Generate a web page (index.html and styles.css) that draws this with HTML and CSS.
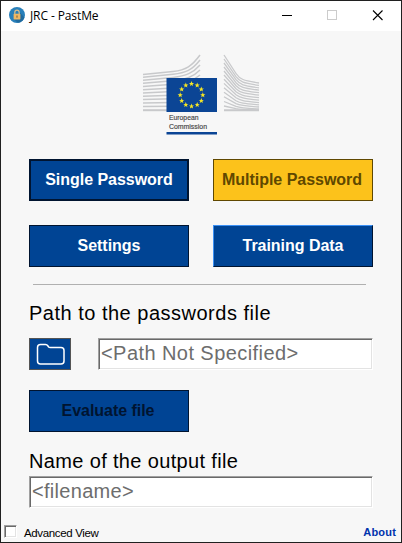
FILE: index.html
```html
<!DOCTYPE html>
<html lang="en">
<head>
<meta charset="utf-8">
<title>JRC - PastMe</title>
<link rel="stylesheet" href="styles.css">
</head>
<body>
<div class="window">
  <header class="titlebar">
    <svg class="app-icon" width="16" height="16" viewBox="0 0 16 16">
      <circle cx="8" cy="8" r="8" fill="#2980ba"/>
      <path d="M11 5.500L15.400 10.500A8 8 0 0 1 9 15.800L5 12.500Z" fill="#206a9e"/>
      <path d="M5.800 7V5.400a2.200 2.200 0 0 1 4.400 0V7" fill="none" stroke="#d9bd8c" stroke-width="1.200"/>
      <rect x="4.600" y="6.800" width="6.800" height="5.600" rx=".6" fill="#efb865"/>
      <rect x="7.400" y="8.500" width="1.200" height="2.200" fill="#8a6b3d"/>
    </svg>
    <span class="title">JRC - PastMe</span>
    <svg class="controls" width="136" height="30" viewBox="0 0 136 30" fill="none" shape-rendering="crispEdges">
      <path d="M17 14.500h10" stroke="#000"/>
      <rect x="62.500" y="9.500" width="9" height="9" stroke="#ccc"/>
      <path d="M108 9.500l9.500 9.500M117.500 9.500l-9.500 9.500" stroke="#000" stroke-width="1.100" shape-rendering="auto"/>
    </svg>
  </header>
  <main class="content">
    <svg class="logo" width="118" height="82" viewBox="0 0 118 82">
      <g fill="none" stroke="#c8c9cb" stroke-width="1.500">
        <path d="M1 20.500L31 17.500C44 16 50 12 58 1"/>
        <path d="M1 23.200L31 20.300C44 19 50 16 58 6"/>
        <path d="M1 26.200L31 23.400C44 22 51 19 58 11"/>
        <path d="M1 29.200L31 26.800C44 25.500 51 23 58 16"/>
        <path d="M1 32.500L31 30.200C44 29 51 27 58 21"/>
        <path d="M1 35.700L31 34"/>
        <path d="M1 39L31 37.500"/>
        <path d="M1 42.300L31 41.200"/>
        <path d="M1 45.600L31 44.800"/>
        <path d="M1 49L31 48.500"/>
        <path d="M1 52.400L31 52.200"/>
        <path d="M1 56.200H31" stroke-width="2"/>
      </g>
      <g fill="none" stroke="#c8c9cb" stroke-width="1.300">
        <path d="M82 1L94 19.500C98 25.500 101 26.300 117 29"/>
        <path d="M82 5L94 22.600C98 28 101 28.900 117 31.400"/>
        <path d="M82 9L94 25.700C98 30.700 101 31.500 117 33.800"/>
        <path d="M82 13L94 28.700C98 33.300 101 34.100 117 36.200"/>
        <path d="M82 17L94 31.700C98 35.900 101 36.700 117 38.700"/>
        <path d="M82 21L94 34.700C98 38.500 101 39.200 117 41.200"/>
        <path d="M82 25.200L94 37.800C98 41.100 101 41.900 117 43.700"/>
        <path d="M82 29.400L94 40.800C98 43.700 101 44.400 117 46.200"/>
        <path d="M82 33.700L94 43.800C98 46.300 101 47 117 48.600"/>
        <path d="M82 38.200L94 46.700C98 48.900 101 49.500 117 50.900"/>
        <path d="M82 42.800L94 49.600C98 51.400 101 51.900 117 53"/>
        <path d="M82 47.500L94 52.300C98 53.700 101 54.200 117 55"/>
        <path d="M82 52L94 54.700C98 55.500 101 55.700 117 56"/>
        <path d="M82 56.200H117" stroke-width="2"/>
      </g>
      <rect x="24.500" y="24" width="50.500" height="34" fill="#0b4595"/>
      <defs><path id="star" d="M0-2.700L.75-.8 2.600-.75 1.100 .4 1.600 2.200 0 1.200-1.600 2.200-1.100 .4-2.600-.75-.75-.8Z"/></defs>
      <g fill="#f5e624">
        <use href="#star" x="49.500" y="29.800"/><use href="#star" x="55.200" y="31.300"/>
        <use href="#star" x="59.300" y="35.300"/><use href="#star" x="60.800" y="41"/>
        <use href="#star" x="59.300" y="46.700"/><use href="#star" x="55.200" y="50.700"/>
        <use href="#star" x="49.500" y="52.200"/><use href="#star" x="43.800" y="50.700"/>
        <use href="#star" x="39.700" y="46.700"/><use href="#star" x="38.200" y="41"/>
        <use href="#star" x="39.700" y="35.300"/><use href="#star" x="43.800" y="31.300"/>
      </g>
      <text class="logo-text" x="27" y="66.300" textLength="29.500" lengthAdjust="spacingAndGlyphs">European</text>
      <text class="logo-text" x="27" y="75" textLength="38" lengthAdjust="spacingAndGlyphs">Commission</text>
      <rect x="24.500" y="78" width="50.500" height="2.500" fill="#0b4595"/>
    </svg>
    <nav class="tabs">
      <button class="btn focused">Single Password</button>
      <button class="btn active">Multiple Password</button>
      <button class="btn">Settings</button>
      <button class="btn raised">Training Data</button>
    </nav>
    <div class="divider"></div>
    <div class="label">Path to the passwords file</div>
    <div class="file-row">
      <button class="browse">
        <svg width="40" height="30" viewBox="0 0 40 30"><path d="M7.500 9.200V8.500Q7.500 5.500 10.500 5.500H15.500Q17 5.500 18 7L18.500 7.800Q19 8.600 20.500 8.600H31Q34 8.600 34 11.500V22Q34 25 31 25H10.500Q7.500 25 7.500 22Z" fill="none" stroke="#fff" stroke-width="1.500"/></svg>
      </button>
      <div class="field">&lt;Path Not Specified&gt;</div>
    </div>
    <button class="btn evaluate">Evaluate file</button>
    <div class="label output-label">Name of the output file</div>
    <div class="field output">&lt;filename&gt;</div>
  </main>
  <footer class="footer">
    <span class="checkbox"></span>
    <span class="advanced">Advanced View</span>
    <a class="about">About</a>
  </footer>
</div>
</body>
</html>
```
FILE: styles.css
```css
* { box-sizing: border-box; }
body { margin: 0; font-family: "Liberation Sans", Arial, sans-serif; }
.window {
  width: 402px; height: 543px; border: 1px solid #202020;
  background: #f7f7f7; display: flex; flex-direction: column; overflow: hidden;
}
.titlebar { height: 30px; flex: none; background: #fff; display: flex; align-items: center; padding-left: 8px; }
.app-icon { margin-top: -2px; }
.title { margin-left: 5px; margin-top: -1px; font: 12px "Open Sans", "Noto Sans", sans-serif; letter-spacing: -0.1px; }
.controls { margin-left: auto; }
.content { height: 492px; flex: none; padding: 23px 28px 0; display: flex; flex-direction: column; align-items: flex-start; }
.logo { display: block; margin-left: 113px; flex: none; }
.logo-text { font: 7.2px/1 "Liberation Sans", sans-serif; fill: #444; stroke: #444; stroke-width: .15px; }
.tabs { display: grid; grid-template-columns: 160px 160px; gap: 24px; margin-top: 23px; }
.btn {
  width: 160px; height: 42px; flex: none; padding: 0; background: #004494; color: #fff;
  border: 1px solid #001430; font: bold 16px "Liberation Sans", Arial, sans-serif; letter-spacing: -.03px;
}
.focused { border-width: 2px; }
.active { background: #fcc21b; color: #604800; border-color: #604800; padding-right: 2px; }
.raised { border-color: #3c91f5 #001430 #001430 #3c91f5; }
.divider { width: 333px; height: 1px; background: #b0b0b0; margin: 17px 0 0 4px; flex: none; }
.label { height: 24px; line-height: 24px; font-size: 20px; letter-spacing: .5px; margin-top: 16px; white-space: nowrap; color: #000; }
.file-row { display: flex; gap: 27px; margin-top: 13px; }
.browse { width: 42px; height: 32px; padding: 0; background: #004494; border: 1px solid #555; }
.browse svg { display: block; }
.field {
  width: 275px; height: 32px; background: #fff; color: #6d6d6d; font-size: 20px; line-height: 27px;
  letter-spacing: .43px; border: 1px solid; border-color: #a0a0a0 #fff #fff #a0a0a0;
  box-shadow: inset 1px 1px #696969, inset -1px -1px #e3e3e3; white-space: nowrap; padding: 1px 0 0 2px;
}
.evaluate { margin-top: 20px; color: #001430; padding-right: 2px; }
.output-label { margin-top: 17px; letter-spacing: .35px; }
.output { width: 344px; margin-top: 3px; letter-spacing: .3px; }
.footer { height: 19px; display: flex; align-items: center; padding: 0 5px 0 3px; }
.checkbox {
  width: 13px; height: 13px; background: #fff; border: 1px solid; border-color: #a0a0a0 #fff #fff #a0a0a0;
  box-shadow: inset 1px 1px #696969, inset -1px -1px #e3e3e3; margin-top: -2px;
}
.advanced { font-size: 11.5px; margin-left: 7px; letter-spacing: -.35px; }
.about { margin-left: auto; margin-top: -1px; font-size: 11px; font-weight: bold; color: #0033ad; letter-spacing: .2px; }
```
